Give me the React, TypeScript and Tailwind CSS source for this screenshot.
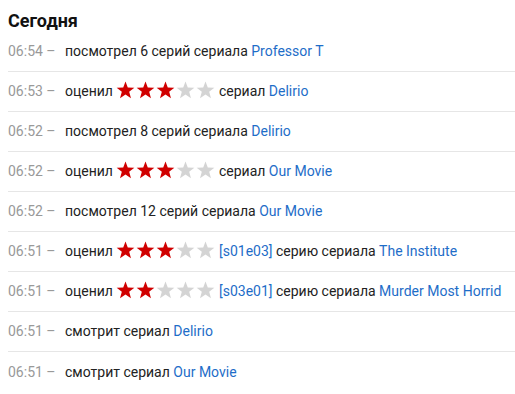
import React from "react";

const Star = ({ on }: { on: boolean }) => (
  <svg width="19" height="18" viewBox="0 0 24 23" className="shrink-0">
    <polygon
      points="12,0.5 14.9,8.3 23.3,8.6 16.7,13.8 19,21.9 12,17.2 5,21.9 7.3,13.8 0.7,8.6 9.1,8.3"
      fill={on ? "#d00000" : "#d4d4d4"}
    />
  </svg>
);

const Stars = ({ n }: { n: number }) => (
  <span className="inline-flex items-center gap-[1px] ml-[3px] mr-[4px] align-[-3px]">
    {[0, 1, 2, 3, 4].map((i) => (
      <Star key={i} on={i < n} />
    ))}
  </span>
);

const L = ({ children }: { children: React.ReactNode }) => (
  <span className="text-[#1e6dc8]">{children}</span>
);

type Row = { t: string; c: React.ReactNode };

const rows: Row[] = [
  { t: "06:54", c: <>посмотрел 6 серий сериала <L>Professor T</L></> },
  { t: "06:53", c: <>оценил<Stars n={3} />сериал <L>Delirio</L></> },
  { t: "06:52", c: <>посмотрел 8 серий сериала <L>Delirio</L></> },
  { t: "06:52", c: <>оценил<Stars n={3} />сериал <L>Our Movie</L></> },
  { t: "06:52", c: <>посмотрел 12 серий сериала <L>Our Movie</L></> },
  { t: "06:51", c: <>оценил<Stars n={3} /><L>[s01e03]</L> серию сериала <L>The Institute</L></> },
  { t: "06:51", c: <>оценил<Stars n={2} /><L>[s03e01]</L> серию сериала <L>Murder Most Horrid</L></> },
  { t: "06:51", c: <>смотрит сериал <L>Delirio</L></> },
  { t: "06:51", c: <>смотрит сериал <L>Our Movie</L></> },
];

export default function App() {
  return (
    <div
      className="w-[515px] h-[394px] bg-white pl-[8px] pt-[9px] overflow-hidden"
      style={{ fontFamily: "Roboto, 'Noto Sans', sans-serif" }}
    >
      <h2 className="text-[18px] font-bold leading-[23px] text-[#111]">Сегодня</h2>
      <div className="flex flex-col">
        {rows.map((r, i) => (
          <div
            key={i}
            className={`h-[40px] flex items-center text-[14px] text-[#222] whitespace-nowrap ${
              i < rows.length - 1 ? "border-b border-[#e6e6e6]" : ""
            }`}
          >
            <span className="text-[#999] w-[57px] shrink-0">{r.t} –</span>
            <span className="block">{r.c}</span>
          </div>
        ))}
      </div>
    </div>
  );
}
